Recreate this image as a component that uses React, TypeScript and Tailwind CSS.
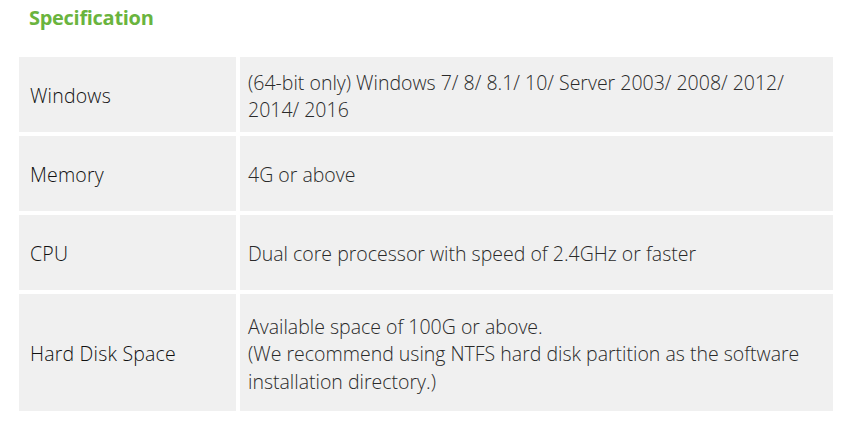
const rows: { label: string; value: string[] }[] = [
  {
    label: 'Windows',
    value: ['(64-bit only) Windows 7/ 8/ 8.1/ 10/ Server 2003/ 2008/ 2012/', '2014/ 2016'],
  },
  { label: 'Memory', value: ['4G or above'] },
  { label: 'CPU', value: ['Dual core processor with speed of 2.4GHz or faster'] },
  {
    label: 'Hard Disk Space',
    value: [
      'Available space of 100G or above.',
      '(We recommend using NTFS hard disk partition as the software',
      'installation directory.)',
    ],
  },
]

export default function App() {
  return (
    <div className="w-[843px] h-[421px] bg-white font-['Open_Sans',sans-serif] overflow-hidden">
      <h2 className="pl-[29px] pt-[3px] h-[57px] text-[20px] font-bold text-[#6ab43e] tracking-[-0.3px]">
        Specification
      </h2>
      <div className="ml-[19px] w-[814px] flex flex-col gap-[4px]">
        {rows.map((r, i) => (
          <div key={r.label} className={`flex gap-[4px] ${i === 3 ? 'h-[117px]' : 'h-[75px]'}`}>
            <div className="w-[217px] bg-[#f0f0f0] flex items-center pl-[11px] pt-[2px] text-[19.5px] font-[350] tracking-[0.2px] text-[#111]">
              {r.label}
            </div>
            <div className="flex-1 bg-[#f0f0f0] flex flex-col justify-center pl-[8px] pt-[3px] text-[19.5px] font-[350] leading-[27.5px] text-[#2a2a2a]">
              {r.value.map((v) => (
                <div key={v}>{v}</div>
              ))}
            </div>
          </div>
        ))}
      </div>
    </div>
  )
}
